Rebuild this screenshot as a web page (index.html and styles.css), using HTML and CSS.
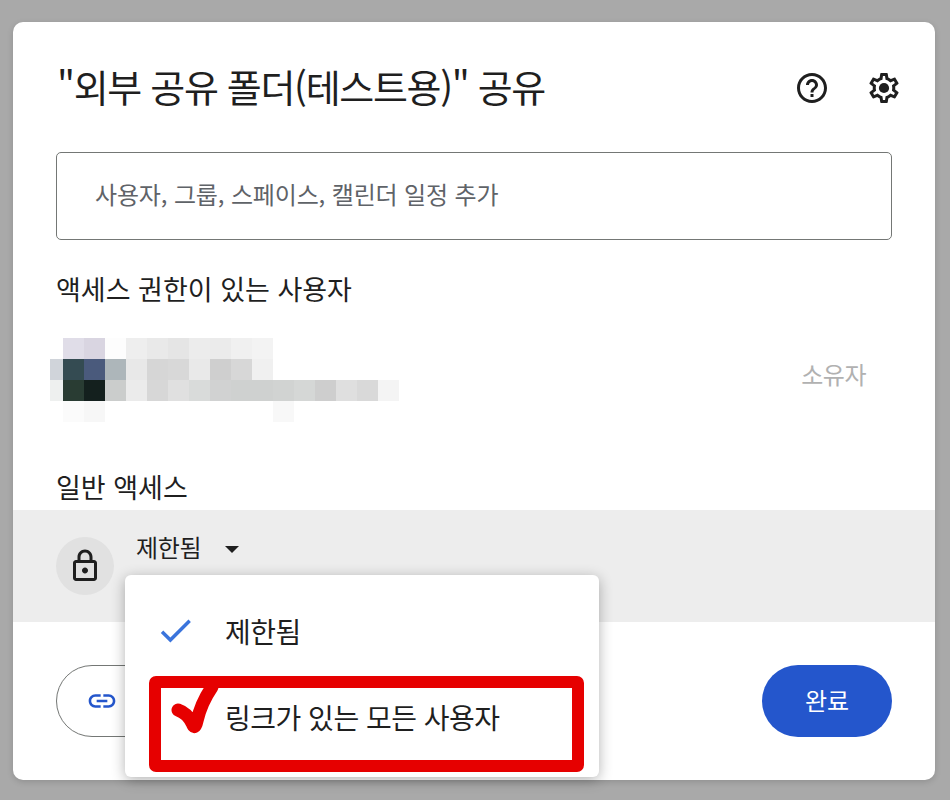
FILE: index.html
```html
<!DOCTYPE html>
<html lang="ko">
<head>
<meta charset="utf-8">
<title>공유</title>
<link rel="stylesheet" href="styles.css">
</head>
<body>
<main class="card">
  <header class="head">
    <h1 class="title">"외부 공유 폴더(테스트용)" 공유</h1>
    <div class="head-icons">
      <svg class="icon-36" viewBox="0 0 24 24"><path d="M11 18h2v-2h-2v2zm1-16C6.48 2 2 6.48 2 12s4.48 10 10 10 10-4.48 10-10S17.52 2 12 2zm0 18c-4.41 0-8-3.59-8-8s3.59-8 8-8 8 3.59 8 8-3.59 8-8 8zm0-14c-2.21 0-4 1.79-4 4h2c0-1.1.9-2 2-2s2 .9 2 2c0 2-3 1.75-3 5h2c0-2.25 3-2.5 3-5 0-2.21-1.79-4-4-4z"/></svg>
      <svg class="icon-36" viewBox="0 0 24 24"><path d="M19.43 12.98c.04-.32.07-.64.07-.98 0-.34-.03-.66-.07-.98l2.11-1.65c.19-.15.24-.42.12-.64l-2-3.46c-.09-.16-.26-.25-.44-.25-.06 0-.12.01-.17.03l-2.49 1c-.52-.4-1.08-.73-1.69-.98l-.38-2.65C14.46 2.18 14.25 2 14 2h-4c-.25 0-.46.18-.49.42l-.38 2.65c-.61.25-1.17.59-1.69.98l-2.49-1c-.06-.02-.12-.03-.18-.03-.17 0-.34.09-.43.25l-2 3.46c-.13.22-.07.49.12.64l2.11 1.65c-.04.32-.07.65-.07.98 0 .33.03.66.07.98l-2.11 1.65c-.19.15-.24.42-.12.64l2 3.46c.09.16.26.25.44.25.06 0 .12-.01.17-.03l2.49-1c.52.4 1.08.73 1.69.98l.38 2.65c.03.24.24.42.49.42h4c.25 0 .46-.18.49-.42l.38-2.65c.61-.25 1.17-.59 1.69-.98l2.49 1c.06.02.12.03.18.03.17 0 .34-.09.43-.25l2-3.46c.12-.22.07-.49-.12-.64l-2.11-1.65zm-1.98-1.71c.04.31.05.52.05.73 0 .21-.02.43-.05.73l-.14 1.13.89.7 1.08.84-.7 1.21-1.27-.51-1.04-.42-.9.68c-.43.32-.84.56-1.25.73l-1.06.43-.16 1.13-.2 1.35h-1.4l-.19-1.35-.16-1.13-1.06-.43c-.43-.18-.83-.41-1.23-.71l-.91-.7-1.06.43-1.27.51-.7-1.21 1.08-.84.89-.7-.14-1.13c-.03-.31-.05-.54-.05-.74s.02-.43.05-.73l.14-1.13-.89-.7-1.08-.84.7-1.21 1.27.51 1.04.42.9-.68c.43-.32.84-.56 1.25-.73l1.06-.43.16-1.13.2-1.35h1.39l.19 1.35.16 1.13 1.06.43c.43.18.83.41 1.23.71l.91.7 1.06-.43 1.27-.51.7 1.21-1.07.85-.89.7.14 1.13z"/><circle cx="12" cy="12" r="3.4"/></svg>
    </div>
  </header>

  <div class="search"><span class="search-text">사용자, 그룹, 스페이스, 캘린더 일정 추가</span></div>

  <h2 class="section-title section-people">액세스 권한이 있는 사용자</h2>

  <div class="person">
    <svg class="blur" viewBox="0 0 349 84" shape-rendering="crispEdges" aria-hidden="true">
      <rect x="13" y="0" width="21" height="21" fill="#e0dde8"/><rect x="34" y="0" width="21" height="21" fill="#d9d5e1"/><rect x="55" y="0" width="21" height="21" fill="#fdfdfd"/><rect x="76" y="0" width="21" height="21" fill="#eeeeee"/><rect x="97" y="0" width="21" height="21" fill="#e9e9e9"/><rect x="118" y="0" width="21" height="21" fill="#e5e5e5"/><rect x="139" y="0" width="21" height="21" fill="#ececec"/><rect x="160" y="0" width="21" height="21" fill="#ebebeb"/><rect x="181" y="0" width="21" height="21" fill="#f0f0f0"/><rect x="202" y="0" width="21" height="21" fill="#f3f3f3"/>
      <rect x="0" y="21" width="13" height="21" fill="#d0d4da"/><rect x="13" y="21" width="21" height="21" fill="#344b52"/><rect x="34" y="21" width="21" height="21" fill="#4a5a7c"/><rect x="55" y="21" width="21" height="21" fill="#adb6ba"/><rect x="76" y="21" width="21" height="21" fill="#e8e8e8"/><rect x="97" y="21" width="21" height="21" fill="#d6d6d6"/><rect x="118" y="21" width="21" height="21" fill="#d8d8d8"/><rect x="139" y="21" width="21" height="21" fill="#e9e9e9"/><rect x="160" y="21" width="21" height="21" fill="#cfcfcf"/><rect x="181" y="21" width="21" height="21" fill="#d7d7d7"/><rect x="202" y="21" width="21" height="21" fill="#f0f0f0"/>
      <rect x="0" y="42" width="13" height="21" fill="#eef0ef"/><rect x="13" y="42" width="21" height="21" fill="#293c33"/><rect x="34" y="42" width="21" height="21" fill="#14201e"/><rect x="55" y="42" width="21" height="21" fill="#cbcdcc"/><rect x="76" y="42" width="21" height="21" fill="#ebebeb"/><rect x="97" y="42" width="21" height="21" fill="#d7d7d7"/><rect x="118" y="42" width="21" height="21" fill="#e0e0e0"/><rect x="139" y="42" width="21" height="21" fill="#d9dbda"/><rect x="160" y="42" width="21" height="21" fill="#d1d2d2"/><rect x="181" y="42" width="42" height="21" fill="#cfd1d0"/><rect x="223" y="42" width="21" height="21" fill="#d1d3d2"/><rect x="244" y="42" width="21" height="21" fill="#d5d7d6"/><rect x="265" y="42" width="21" height="21" fill="#cecece"/><rect x="286" y="42" width="21" height="21" fill="#dfdfdf"/><rect x="307" y="42" width="21" height="21" fill="#d9d9d9"/><rect x="328" y="42" width="21" height="21" fill="#f4f4f4"/>
      <rect x="13" y="63" width="21" height="21" fill="#fbfbfb"/><rect x="34" y="63" width="21" height="21" fill="#f7f7f7"/><rect x="223" y="63" width="21" height="21" fill="#f8f8f8"/>
    </svg>
    <span class="owner">소유자</span>
  </div>

  <h2 class="section-title section-general">일반 액세스</h2>

  <section class="access">
    <div class="lock">
      <svg class="icon-36" viewBox="0 0 24 24"><path d="M18 8h-1V6c0-2.76-2.24-5-5-5S7 3.24 7 6v2H6c-1.1 0-2 .9-2 2v10c0 1.1.9 2 2 2h12c1.1 0 2-.9 2-2V10c0-1.1-.9-2-2-2zM9 6c0-1.66 1.34-3 3-3s3 1.34 3 3v2H9V6zm9 14H6V10h12v10zm-6-3c1.1 0 2-.9 2-2s-.9-2-2-2-2 .9-2 2 .9 2 2 2z"/></svg>
    </div>
    <div class="access-select">
      <span class="access-label">제한됨</span>
      <i class="caret"></i>
    </div>
  </section>

  <footer class="actions">
    <div class="copy">
      <svg class="icon-link" viewBox="0 0 24 24"><path d="M3.9 12c0-1.71 1.39-3.1 3.1-3.1h4V7H7c-2.76 0-5 2.24-5 5s2.24 5 5 5h4v-1.9H7c-1.71 0-3.1-1.39-3.1-3.1zM8 13h8v-2H8v2zm9-6h-4v1.9h4c1.71 0 3.1 1.39 3.1 3.1s-1.39 3.1-3.1 3.1h-4V17h4c2.76 0 5-2.24 5-5s-2.24-5-5-5z"/></svg>
    </div>
    <div class="done"><span class="done-label">완료</span></div>
  </footer>

  <div class="menu">
    <div class="menu-item menu-item-first">
      <svg class="icon-check" viewBox="0 0 24 24"><path d="M9 16.17L4.83 12l-1.42 1.41L9 19 21 7l-1.41-1.41z"/></svg>
      <span>제한됨</span>
    </div>
    <div class="menu-item menu-item-second">
      <span class="second-label">링크가 있는 모든 사용자</span>
    </div>
    <div class="mark-box"></div>
    <svg class="mark-check" viewBox="0 0 60 60" aria-hidden="true"><path d="M9 25 Q18 28 23 38 Q26 46 28 36 Q32 18 43 2" /></svg>
  </div>
</main>
</body>
</html>
```
FILE: styles.css
```css
* { box-sizing: border-box; }
html, body { margin: 0; height: 100%; }
body {
  background: #a9a9a9;
  padding: 22px 15px 20px 13px;
  font-family: "Noto Sans CJK KR", "Noto Sans", sans-serif;
  color: #1f1f1f;
  overflow: hidden;
}
.card {
  position: relative;
  height: 758px;
  background: #fff;
  border-radius: 10px;
  box-shadow: 0 2px 6px rgba(0,0,0,.15);
  display: flex;
  flex-direction: column;
}
.head {
  display: flex;
  align-items: center;
  justify-content: space-between;
  height: 60px;
  margin: 36px 33px 0 44px;
}
.title { margin: 0; font-size: 38px; font-weight: 400; letter-spacing: -1.33px; line-height: 60px; white-space: nowrap; position: relative; top: -2px; }
.head-icons { display: flex; gap: 36px; }
.icon-36 { width: 36px; height: 36px; display: block; fill: #1f1f1f; }
.search {
  margin: 34px 43px 0;
  height: 88px;
  border: 1px solid #747775;
  border-radius: 5px;
  padding-left: 38px;
  display: flex;
  align-items: center;
  font-size: 24px;
  letter-spacing: -.15px;
  color: #5f6368;
}
.search-text { padding-bottom: 6px; }
.section-title { margin: 0 43px; font-size: 27px; font-weight: 400; letter-spacing: 0; line-height: 40px; }
.section-people { margin-top: 29px; }
.person {
  display: flex;
  justify-content: space-between;
  align-items: center;
  height: 84px;
  margin: 29px 69px 0 37px;
}
.blur { width: 349px; height: 84px; display: block; }
.owner { font-size: 24px; color: #b1b1b1; letter-spacing: -.5px; padding-bottom: 14px; }
.section-general { margin-top: 45px; }
.access {
  display: flex;
  background: #ededed;
  height: 112px;
  margin-top: 3px;
  padding: 27px 0 0 43px;
}
.lock {
  width: 58px; height: 58px;
  border-radius: 50%;
  background: #e1e1e1;
  display: flex;
  align-items: center;
  justify-content: center;
}
.access-select {
  margin: -8px 0 0 22px;
  height: 40px;
  display: flex;
  align-items: center;
  font-size: 24px;
  letter-spacing: -.3px;
}
.access-label { padding-bottom: 6px; }
.caret {
  margin-left: 24px;
  width: 0; height: 0;
  border-left: 7px solid transparent;
  border-right: 7px solid transparent;
  border-top: 7px solid #1f1f1f;
}
.actions {
  display: flex;
  justify-content: space-between;
  margin: 43px 43px 0;
  height: 72px;
}
.copy {
  width: 220px;
  height: 72px;
  border: 1px solid #747775;
  border-radius: 36px;
  padding-left: 29px;
  display: flex;
  align-items: center;
}
.icon-link { width: 32px; height: 32px; fill: #2456cc; display: block; }
.done {
  width: 130px;
  height: 72px;
  border-radius: 36px;
  background: #2456cc;
  color: #fff;
  font-size: 24px;
  display: flex;
  align-items: center;
  justify-content: center;
}
.done-label { padding-bottom: 4px; }
.menu {
  position: absolute;
  left: 112px;
  top: 553px;
  width: 474px;
  height: 202px;
  background: #fff;
  border-radius: 6px;
  box-shadow: 0 3px 14px rgba(0,0,0,.3);
  display: flex;
  flex-direction: column;
  font-size: 28px;
  letter-spacing: -.5px;
}
.menu-item { display: flex; align-items: center; height: 88px; padding-left: 100px; position: relative; }
.menu-item-first { margin-top: 12px; }
.second-label { padding-bottom: 4px; }
.icon-check { position: absolute; left: 30px; top: 23px; width: 41px; height: 41px; fill: #3a74dc; }
.mark-box {
  position: absolute;
  left: 24px; top: 101px;
  width: 435px; height: 96px;
  border: 12px solid #e60000;
  border-radius: 7px;
}
.mark-check {
  position: absolute;
  left: 44px; top: 110px;
  width: 60px; height: 60px;
  fill: none;
  stroke: #e60000;
  stroke-width: 13;
  stroke-linecap: round;
  stroke-linejoin: round;
}
```
